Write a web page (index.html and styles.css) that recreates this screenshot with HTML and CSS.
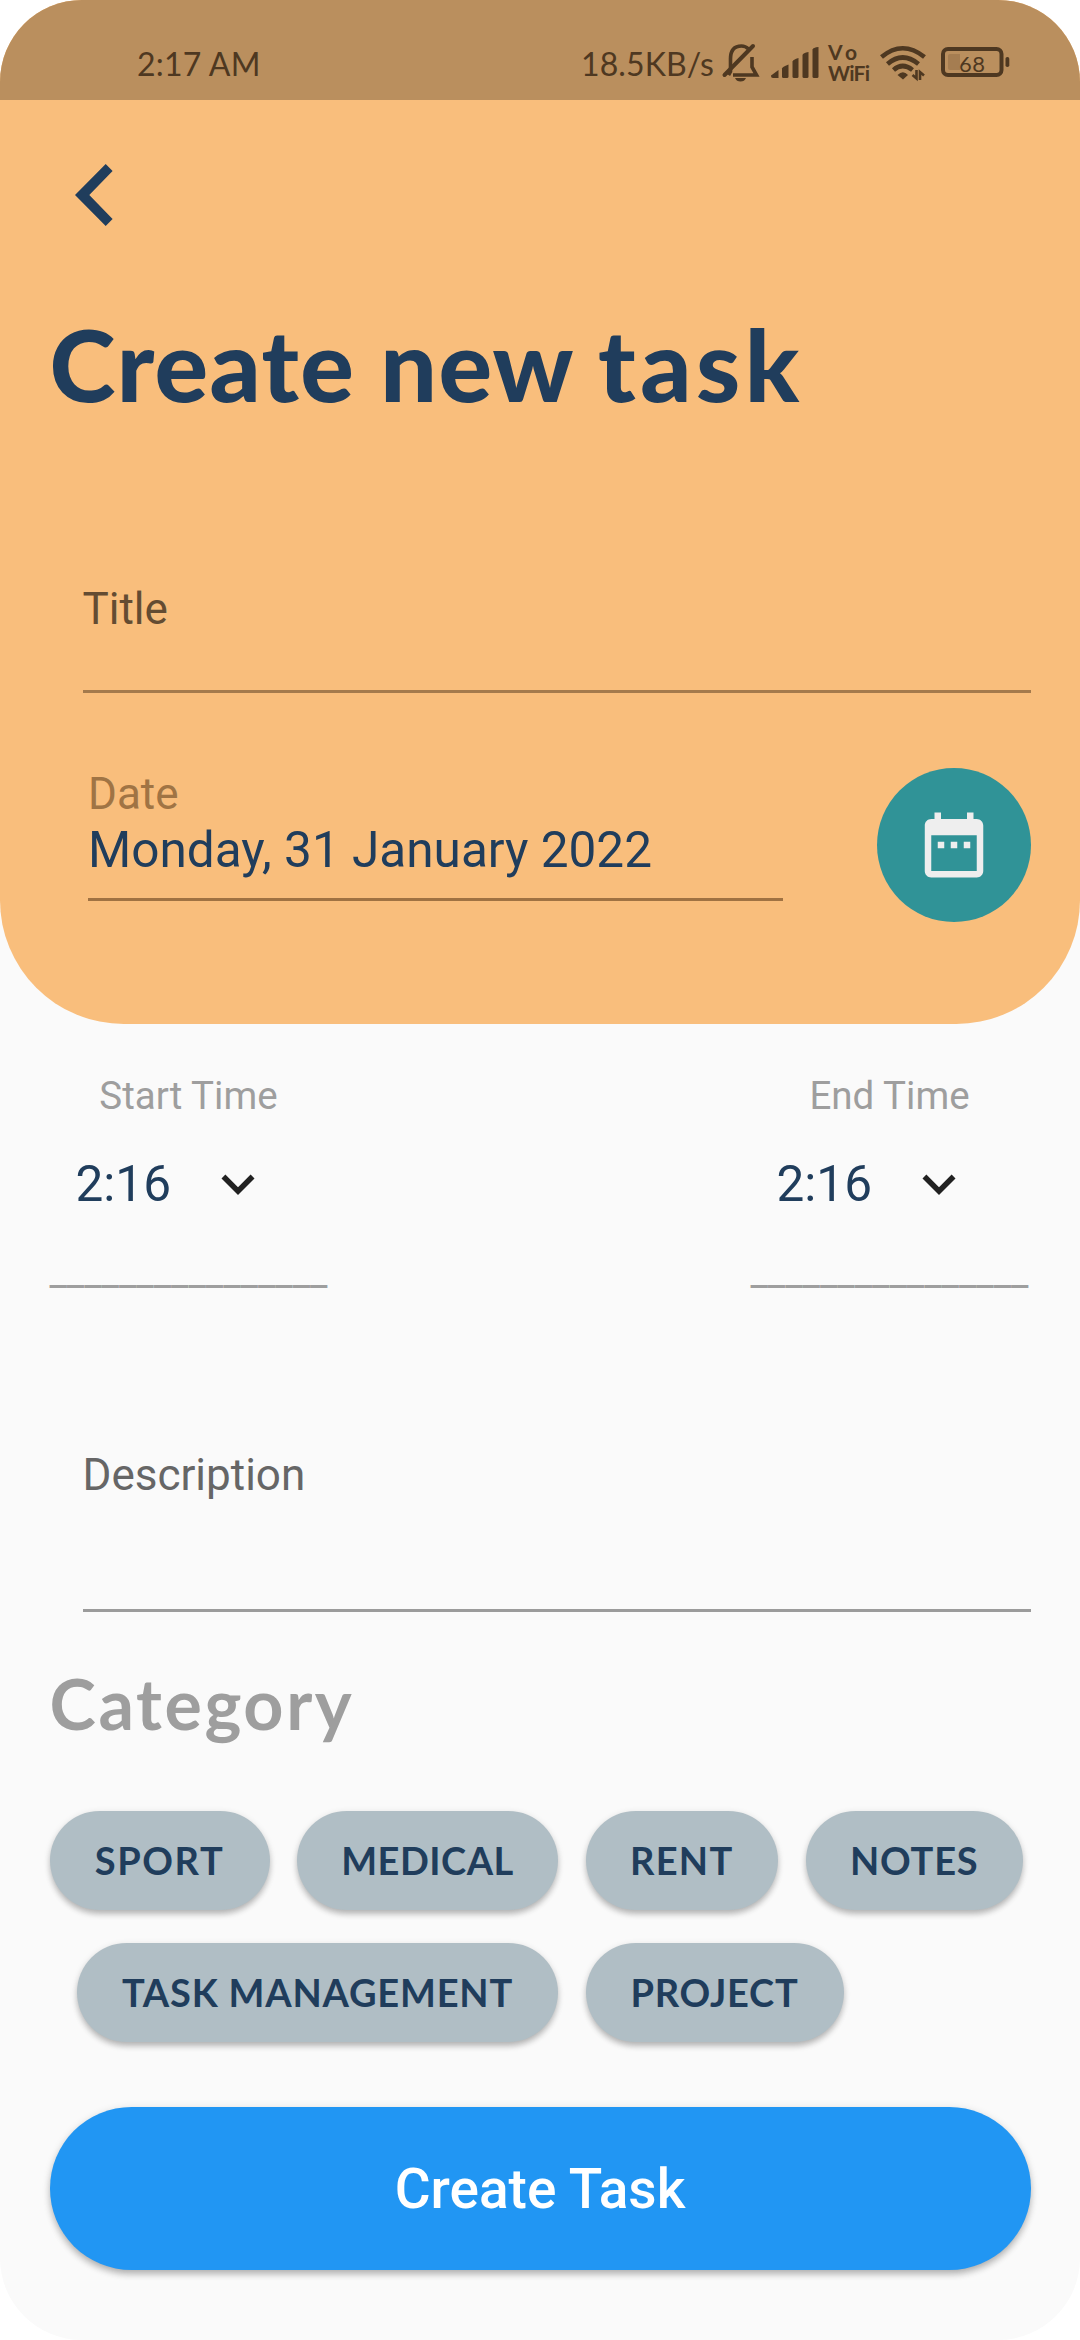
FILE: index.html
```html
<!DOCTYPE html>
<html lang="en">
<head>
<meta charset="utf-8">
<title>Create new task</title>
<link rel="stylesheet" href="styles.css">
</head>
<body>
<div class="screen">
  <header class="header">
    <div class="status">
      <span class="clock">2:17 AM</span>
      <div class="indicators">
        <span class="speed">18.5KB/s</span>
        <svg class="ind-icons" width="300" height="48" viewBox="720 40 300 48" fill="none" stroke="#4e3821">
          <g stroke-width="3.6">
            <path d="M728.5 75 730.5 71.500V59Q730.500 46 741.500 46Q745.500 46 748.500 49M752 57V67L756.500 75H733" />
            <path d="M724.500 75 753 46" stroke-width="4" stroke-linecap="round"/>
            <path d="M735 78H746Q744.500 81.500 740.500 81.500T735 78Z" fill="#4e3821" stroke="none"/>
          </g>
          <g fill="#4e3821" stroke="none">
            <path d="M771 75.500 778.500 70V78H773Q771 78 771 76Z"/>
            <path d="M782 68.500Q782 67 788.500 64.500V76.500Q788.500 78 787 78H783.500Q782 78 782 76.500Z"/>
            <path d="M792.500 61.500Q793 59.500 798.500 58V76.500Q798.500 78 797 78H794Q792.500 78 792.500 76.500Z"/>
            <path d="M802.500 55Q803 53 808.500 52V76.500Q808.500 78 807 78H804Q802.500 78 802.500 76.500Z"/>
            <path d="M812.500 49.500Q813 47.500 818.500 47V76.500Q818.500 78 817 78H814Q812.500 78 812.500 76.500Z"/>
          </g>
          <g fill="#4e3821" stroke="none" class="vowifi">
            <text x="828" y="59.500" textLength="29">Vo</text>
            <text x="828" y="80.500" textLength="42">WiFi</text>
          </g>
          <g stroke-width="4.600">
            <path d="M881.500 57Q902.500 39.500 924.500 57"/>
            <path d="M887.500 64Q902.500 51 918.500 64"/>
            <path d="M893.500 70Q902.500 62 912.500 70"/>
            <path d="M897.500 75Q903 69.500 908 75L903 79.500Z" fill="#4e3821" stroke="none"/>
            <path d="M916.500 70V78.500L912.500 75M920 80V72L924 75.500" stroke-width="2.600"/>
          </g>
          <rect x="943" y="49" width="58.500" height="26" rx="5" stroke-width="4"/>
          <path d="M950 54H960V70H950Q948 70 948 68V56Q948 54 950 54Z" fill="#a57d51" stroke="none"/>
          <rect x="1005.500" y="57" width="3.800" height="10" rx="1.800" fill="#4e3821" stroke="none"/>
          <text class="battery" x="959" y="71.500" textLength="26" fill="#4e3821" stroke="none">68</text>
        </svg>
      </div>
    </div>
    <svg class="back" width="38" height="62" viewBox="0 0 38 62"><path d="M30.700 0 37.600 7 14.300 31 37.600 55 30.700 62 0 31Z" fill="#203d5c"/></svg>
    <h1 class="heading">Create new <span class="wide">task</span></h1>
    <div class="field title-field">Title</div>
    <div class="date-row">
      <div class="date-field">
        <div class="date-label">Date</div>
        <div class="date-value">Monday, 31 January 2022</div>
      </div>
      <div class="calendar">
        <svg width="78" height="78" viewBox="0 0 24 24" fill="#eee"><path d="M9 11H7v2h2v-2zm4 0h-2v2h2v-2zm4 0h-2v2h2v-2zm2-7h-1V2h-2v2H8V2H6v2H5c-1.110 0-1.990.9-1.990 2L3 20c0 1.100.89 2 2 2h14c1.100 0 2-.9 2-2V6c0-1.100-.9-2-2-2zm0 16H5V9h14v11z"/></svg>
      </div>
    </div>
  </header>
  <main class="main">
    <div class="times">
      <div class="time">
        <div class="time-label">Start Time</div>
        <div class="time-value">2:16 <svg width="66" height="66" viewBox="0 0 24 24" fill="#212121"><path d="M16.590 8.590 12 13.170 7.410 8.590 6 10l6 6 6-6z"/></svg></div>
        <div class="time-line">________________</div>
      </div>
      <div class="time">
        <div class="time-label">End Time</div>
        <div class="time-value">2:16 <svg width="66" height="66" viewBox="0 0 24 24" fill="#212121"><path d="M16.590 8.590 12 13.170 7.410 8.590 6 10l6 6 6-6z"/></svg></div>
        <div class="time-line">________________</div>
      </div>
    </div>
    <div class="field description">Description</div>
    <h2 class="category">Category</h2>
    <div class="chips">
      <span class="chip sport">SPORT</span>
      <span class="chip medical">MEDICAL</span>
      <span class="chip rent">RENT</span>
      <span class="chip notes">NOTES</span>
    </div>
    <div class="chips second">
      <span class="chip management">TASK MANAGEMENT</span>
      <span class="chip project">PROJECT</span>
    </div>
    <div class="submit">Create Task</div>
  </main>
</div>
</body>
</html>
```
FILE: styles.css
```css
* { box-sizing: border-box; }
body { margin: 0; background: #fff; font-family: Roboto, sans-serif; }
.screen { width: 1080px; height: 2340px; border-radius: 82px; overflow: hidden; background: #fafafa; }

.header { height: 1023.500px; background: #f9be7c; border-radius: 0 0 123.750px 123.750px; display: flex; flex-direction: column; }
.status { height: 100px; flex: none; background: #ba8f5e; color: #4e3821; display: flex; justify-content: space-between; padding: 40px 60px 0 137px; font: 400 32px/48px Lato, sans-serif; }
.clock { letter-spacing: .2px; }
.indicators { display: flex; }
.speed { width: 139px; letter-spacing: .1px; white-space: nowrap; }
.ind-icons { flex: none; display: block; overflow: visible; }
.vowifi { font: 700 21px Lato, sans-serif; }
.battery { font: 400 22px Lato, sans-serif; }

.back { display: block; margin: 64px 0 0 75px; flex: none; }
.heading { margin: 75px 0 0 49.500px; height: 127px; font: 900 100px/124px Lato, sans-serif; color: #203d5c; white-space: nowrap; letter-spacing: 1.400px; }
.wide { letter-spacing: 4.500px; }

.field { margin-right: 49.500px; margin-left: 82.500px; font-size: 44px; line-height: 52px; }
.title-field { margin-top: 155px; height: 110px; color: #644c32; border-bottom: 3px solid #a47a4c; }
.date-row { display: flex; justify-content: space-between; padding: 0 49.500px 0 88px; margin-top: 75px; }
.date-field { width: 695px; height: 133px; border-bottom: 3px solid #a07242; }
.date-label { font-size: 44px; line-height: 52px; color: #a07444; }
.date-value { font-size: 49.500px; line-height: 60px; color: #203d5c; }
.calendar { width: 154px; height: 154px; border-radius: 50%; background: #309397; display: flex; align-items: center; justify-content: center; }

.main { padding: 0 49.500px; display: flex; flex-direction: column; }
.times { display: flex; justify-content: space-between; padding-top: 49px; margin-right: 2px; }
.time { width: 278px; }
.time-label { font-size: 38.500px; line-height: 46px; color: #9e9e9e; text-align: center; }
.time-value { display: flex; align-items: center; height: 66px; margin-top: 32px; padding-left: 26px; gap: 34px; font-size: 49.500px; color: #203d5c; }
.time-line { font-size: 38.500px; line-height: 46px; margin-top: 32px; color: #9e9e9e; }
.description { margin-left: 33px; margin-right: 0; height: 162.500px; margin-top: 154.500px; color: #666; border-bottom: 3px solid #9b9b9b; }
.category { margin: 49px 0 0; font: 700 70px/84px Lato, sans-serif; letter-spacing: 2.600px; color: #9e9e9e; }
.chips { display: flex; gap: 27.500px; margin-top: 66px; }
.second { padding-left: 27.500px; margin-top: 33px; }
.chip { height: 99px; border-radius: 49.500px; background: #b0bec5; color: #203d5c; font: 700 38px/99px Lato, sans-serif; letter-spacing: .8px; text-align: center; white-space: nowrap; box-shadow: 0 5px 6px -1px rgba(0,0,0,.2), 0 2px 7px rgba(0,0,0,.14); }
.sport { width: 220px; letter-spacing: 1.600px; }
.medical { width: 261px; letter-spacing: .5px; }
.rent { width: 192.500px; letter-spacing: 1.300px; }
.notes { width: 217.500px; }
.management { width: 481px; }
.project { width: 258px; }
.submit { height: 162.500px; margin-top: 65.500px; border-radius: 82px; background: #2196f3; color: #fff; font-weight: 500; font-size: 55px; line-height: 164px; text-align: center; box-shadow: 0 5px 7px -1px rgba(0,0,0,.22), 0 2px 9px rgba(0,0,0,.14); }
```
